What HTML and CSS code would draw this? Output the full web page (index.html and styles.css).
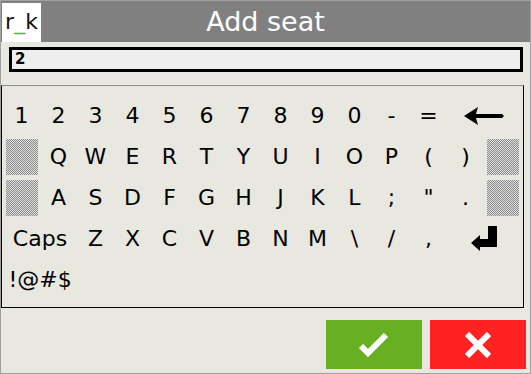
FILE: index.html
```html
<!DOCTYPE html>
<html lang="en">
<head>
    <meta charset="UTF-8">
    <meta name="viewport" content="width=device-width, initial-scale=1.0">
    <title>Add seat</title>
    <link rel="stylesheet" href="styles.css">
</head>
<body>
    <div class="app">
        <div class="header">
            <div class="logo">r<span class="logo-us">_</span>k</div>
            <h1 class="title">Add seat</h1>
        </div>

        <div class="entry">2</div>

        <div class="keyboard">
            <span class="key">1</span><span class="key">2</span><span class="key">3</span><span class="key">4</span><span class="key">5</span>
            <span class="key">6</span><span class="key">7</span><span class="key">8</span><span class="key">9</span><span class="key">0</span>
            <span class="key">-</span><span class="key">=</span>
            <span class="key wide">
                <svg width="40" height="18" viewBox="0 0 40 18"><polygon points="0,9 14,0 12,7 38,7 40,9 38,11 12,11 14,18" fill="#000"/></svg>
            </span>

            <span class="key"><i class="shade"></i></span>
            <span class="key">Q</span><span class="key">W</span><span class="key">E</span><span class="key">R</span><span class="key">T</span>
            <span class="key">Y</span><span class="key">U</span><span class="key">I</span><span class="key">O</span><span class="key">P</span>
            <span class="key">(</span><span class="key">)</span>
            <span class="key"><i class="shade"></i></span>

            <span class="key"><i class="shade"></i></span>
            <span class="key">A</span><span class="key">S</span><span class="key">D</span><span class="key">F</span><span class="key">G</span>
            <span class="key">H</span><span class="key">J</span><span class="key">K</span><span class="key">L</span><span class="key">;</span>
            <span class="key">"</span><span class="key">.</span>
            <span class="key"><i class="shade"></i></span>

            <span class="key wide">Caps</span>
            <span class="key">Z</span><span class="key">X</span><span class="key">C</span><span class="key">V</span><span class="key">B</span>
            <span class="key">N</span><span class="key">M</span><span class="key">\</span><span class="key">/</span><span class="key">,</span>
            <span class="key wide">
                <svg width="26" height="25" viewBox="0 0 26 25"><path d="M17 0H26V21H8V13H17Z M0 17L9 9V25Z" fill="#000"/></svg>
            </span>

            <span class="key wide">!@#$</span>
        </div>

        <div class="actions">
            <button class="btn btn-ok">
                <svg width="32" height="28" viewBox="0 0 32 28"><polyline points="3,15 10,22 28,4" fill="none" stroke="#fff" stroke-width="6"/></svg>
            </button>
            <button class="btn btn-cancel">
                <svg width="26" height="26" viewBox="0 0 26 26"><path d="M2 2L24 24M24 2L2 24" stroke="#fff" stroke-width="6"/></svg>
            </button>
        </div>
    </div>
</body>
</html>
```

FILE: styles.css
```css
body {
    margin: 0;
    font-family: "DejaVu Sans", sans-serif;
}
.app {
    width: 531px;
    height: 374px;
    box-sizing: border-box;
    border: 1px solid #a0a0a0;
    background: #e8e8e0;
}
.header {
    display: flex;
    align-items: center;
    height: 41px;
    background: #808080;
    position: relative;
}
.logo {
    width: 39px;
    height: 39px;
    margin: 1px 0 0 1px;
    background: #fff;
    font-size: 22px;
    line-height: 38px;
    text-align: center;
    color: #111;
}
.logo-us {
    color: #5ab04a;
}
.title {
    position: absolute;
    left: 0;
    right: 0;
    margin: 0;
    text-align: center;
    font-size: 27px;
    font-weight: normal;
    color: #fff;
    line-height: 41px;
}
.entry {
    margin: 5px 7px 0 8px;
    height: 25px;
    box-sizing: border-box;
    border: 3px solid #000;
    background: #eeeeee;
    padding-left: 3px;
    font-size: 15px;
    font-weight: bold;
    line-height: 19px;
}
.keyboard {
    margin: 13px 6px 0 0;
    height: 223px;
    box-sizing: border-box;
    border: 1px solid #000;
    border-top-color: #8c8c8c;
    padding: 9px 0 0 1px;
    display: grid;
    grid-template-columns: repeat(14, 37px);
    grid-auto-rows: 41px;
    align-content: start;
}
.key {
    display: flex;
    align-items: center;
    justify-content: center;
    font-size: 22px;
    color: #000;
}
.key.wide {
    grid-column: span 2;
}
.shade {
    display: block;
    width: 32px;
    height: 36px;
    background: repeating-conic-gradient(#8a8a8a 0 25%, #e0e0e0 0 50%) 0 0 / 2px 2px;
}
.actions {
    display: flex;
    justify-content: flex-end;
    gap: 8px;
    margin-top: 12px;
    padding-right: 4px;
}
.btn {
    width: 96px;
    height: 49px;
    border: none;
    padding: 0;
    display: flex;
    align-items: center;
    justify-content: center;
}
.btn-ok {
    background: #66b021;
}
.btn-cancel {
    background: #ff2222;
}
```
